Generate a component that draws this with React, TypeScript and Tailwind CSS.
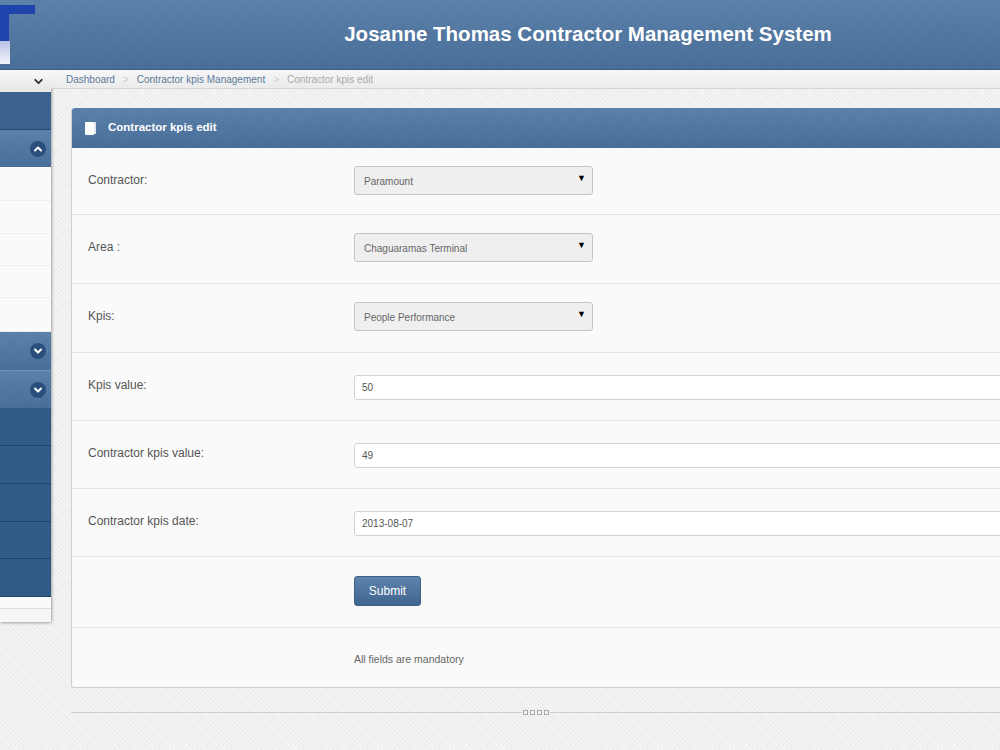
import { ChevronDown, ChevronUp } from 'lucide-react';

const hatch = 'bg-[repeating-linear-gradient(135deg,rgba(255,255,255,0.035)_0px,rgba(255,255,255,0.035)_1px,transparent_1px,transparent_3px),linear-gradient(to_bottom,#5a7fa8,#466d98)]';

const fields = [
    { label: 'Contractor:', value: 'Paramount', kind: 'select', rowHeight: 'h-[67px]' },
    { label: 'Area :', value: 'Chaguaramas Terminal', kind: 'select', rowHeight: 'h-[69px]' },
    { label: 'Kpis:', value: 'People Performance', kind: 'select', rowHeight: 'h-[69px]' },
    { label: 'Kpis value:', value: '50', kind: 'input', rowHeight: 'h-[68px]' },
    { label: 'Contractor kpis value:', value: '49', kind: 'input', rowHeight: 'h-[68px]' },
    { label: 'Contractor kpis date:', value: '2013-08-07', kind: 'input', rowHeight: 'h-[68px]' },
];

function RoundChevron({ up }: { up?: boolean }) {
    return (
        <span className="flex h-4 w-4 items-center justify-center rounded-full bg-[#2a4f7c]">
            {up ? (
                <ChevronUp size={12} strokeWidth={4} className="text-white" />
            ) : (
                <ChevronDown size={12} strokeWidth={4} className="text-white" />
            )}
        </span>
    );
}

function Sidebar() {
    return (
        <aside className="flex h-[552px] w-[51px] shrink-0 flex-col rounded-br-[3px] bg-[#f6f6f6] shadow-[1px_1px_3px_rgba(0,0,0,0.35)]">
            <div className="flex h-[22px] items-center justify-end bg-[linear-gradient(to_bottom,#f8f8f8,#e6e6e6)] pr-[6px]">
                <ChevronDown size={13} strokeWidth={3.5} className="text-[#333]" />
            </div>
            <div className="h-[38px] border-b border-[#234a75] bg-[#3b628f]" />
            <div className={`flex h-[37px] items-center justify-end pr-[5px] ${hatch}`}>
                <RoundChevron up />
            </div>
            {[34, 33, 32, 32, 34].map((h, i) => (
                <div key={i} style={{ height: h }} className="border-b border-[#efefef] bg-[#fafafa]" />
            ))}
            <div className={`flex h-[39px] items-center justify-end border-b border-[#6f8fb3] pr-[5px] ${hatch}`}>
                <RoundChevron />
            </div>
            <div className={`flex h-[37px] items-center justify-end pr-[5px] ${hatch}`}>
                <RoundChevron />
            </div>
            {[38, 38, 38, 37, 38].map((h, i) => (
                <div key={i} style={{ height: h }} className="border-b border-[#1f4468] bg-[#305a87] last:border-b-0" />
            ))}
            <div className="h-[12px] border-b border-[#dcdcdc] bg-[#fafafa]" />
            <div className="h-[13px] bg-[#f6f6f6]" />
        </aside>
    );
}

function Breadcrumb() {
    return (
        <div className="flex h-[19px] items-center gap-[8px] border-b border-[#d4d4d4] bg-[linear-gradient(to_bottom,#f6f6f6,#ebebeb)] pl-[15px] text-[10px] text-[#5b7a99]">
            <span>Dashboard</span>
            <span className="text-[#cccccc]">&gt;</span>
            <span>Contractor kpis Management</span>
            <span className="text-[#cccccc]">&gt;</span>
            <span className="text-[#aaaaaa]">Contractor kpis edit</span>
        </div>
    );
}

function FormRow({ label, value, kind, rowHeight }: { label: string; value: string; kind: string; rowHeight: string }) {
    return (
        <div className={`flex border-b border-[#e3e3e3] pl-[16px] ${rowHeight}`}>
            <div className="w-[266px] shrink-0 pt-[24px] text-[12px] leading-[16px] text-[#555555]">{label}</div>
            {kind === 'select' ? (
                <div className="mt-[18px] flex h-[29px] w-[239px] items-center justify-between rounded-[3px] border border-[#c4c4c4] bg-[#efefef] pl-[9px] pr-[6px] text-[10px] text-[#666666]">
                    <span className="pt-[2px]">{value}</span>
                    <span className="mb-[3px] text-[9px] text-black">▼</span>
                </div>
            ) : (
                <div className="mt-[22px] flex h-[25px] flex-1 items-center rounded-l-[3px] border border-[#d2d2d2] bg-white pl-[7px] text-[10px] text-[#555555]">
                    {value}
                </div>
            )}
        </div>
    );
}

export default function App() {
    return (
        <div className="relative h-[750px] w-[1000px] overflow-hidden bg-[#eeeeee] bg-[repeating-linear-gradient(45deg,rgba(255,255,255,0.5)_0px,rgba(255,255,255,0.5)_1px,transparent_1px,transparent_3px)] font-['Liberation_Sans',Arial,sans-serif]">
            <header className={`relative flex h-[70px] items-center justify-center border-b border-[#3d5f87] pl-[176px] ${hatch}`}>
                <h1 className="text-[20.5px] font-bold text-white">Josanne Thomas Contractor Management System</h1>
                <svg className="absolute left-0 top-0" width="36" height="66" viewBox="0 0 36 66">
                    <defs>
                        <linearGradient id="logoFade" x1="0" y1="0" x2="0" y2="1">
                            <stop offset="0" stopColor="#b7c2e4" />
                            <stop offset="1" stopColor="#f4f5fb" />
                        </linearGradient>
                    </defs>
                    <rect x="0" y="5" width="35" height="9" fill="#1f45ad" />
                    <rect x="0" y="14" width="9" height="27" fill="#1f45ad" />
                    <rect x="0" y="41" width="10" height="23" fill="url(#logoFade)" />
                </svg>
            </header>
            <div className="flex items-start">
                <Sidebar />
                <main className="min-w-0 flex-1">
                    <Breadcrumb />
                    <section className="ml-[20px] mt-[19px] w-[1000px] rounded-[3px] border-b border-l border-[#cfcfcf] bg-[#fafafa]">
                        <div className={`flex h-[40px] items-center rounded-t-[3px] pl-[13px] ${hatch}`}>
                            <svg width="12" height="14" viewBox="0 0 12 14" className="mr-[11px]">
                                <rect x="9" y="1" width="2" height="12" fill="#dfe6ee" />
                                <rect x="0" y="1" width="9" height="13" rx="1" fill="#ffffff" />
                            </svg>
                            <h2 className="text-[11.5px] font-bold text-white">Contractor kpis edit</h2>
                        </div>
                        {fields.map((f) => (
                            <FormRow key={f.label} {...f} />
                        ))}
                        <div className="h-[71px] border-b border-[#e3e3e3] pl-[282px] pt-[19px]">
                            <button className="h-[30px] w-[67px] rounded-[3px] border border-[#3f6289] bg-[linear-gradient(to_bottom,#5f83ab,#3f6690)] text-[12px] text-white">
                                Submit
                            </button>
                        </div>
                        <div className="h-[59px] pl-[282px] pt-[24px] text-[10.5px] leading-[14px] text-[#666666]">All fields are mandatory</div>
                    </section>
                    <div className="ml-[20px] mt-[22px] flex w-[929px] items-center">
                        <div className="h-px flex-1 bg-[#cfcfcf]" />
                        <div className="flex gap-[2px] px-[1px]">
                            {[0, 1, 2, 3].map((i) => (
                                <span key={i} className="h-[5px] w-[5px] border border-[#aaaaaa] bg-[#f4f4f4]" />
                            ))}
                        </div>
                        <div className="h-px flex-1 bg-[#cfcfcf]" />
                    </div>
                </main>
            </div>
        </div>
    );
}
